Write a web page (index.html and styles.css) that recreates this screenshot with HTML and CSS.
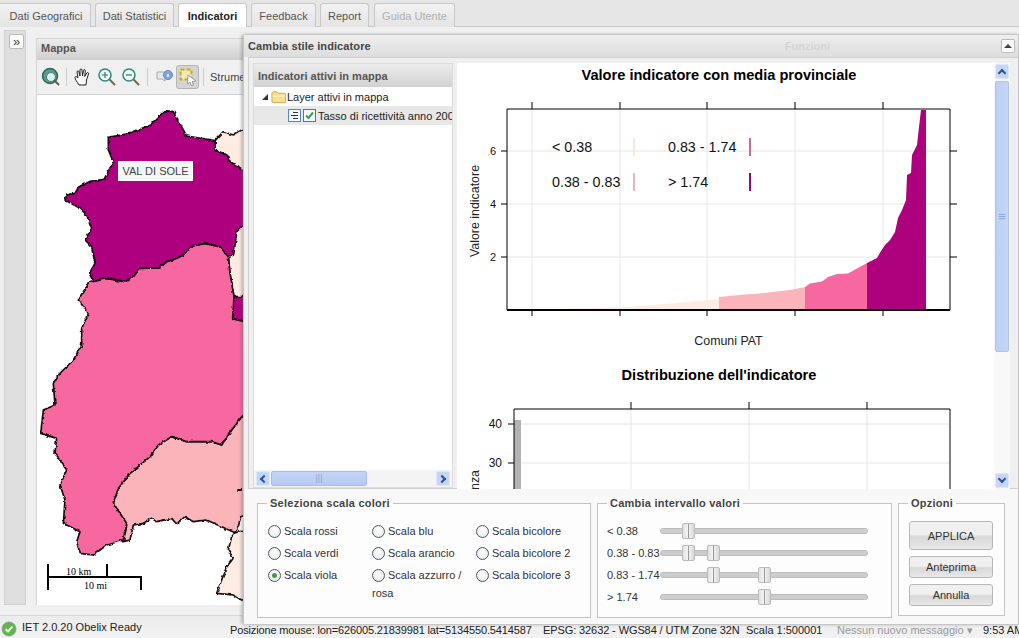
FILE: index.html
```html
<!DOCTYPE html>
<html lang="it">
<head>
<meta charset="utf-8">
<title>IET</title>
<link rel="stylesheet" href="styles.css">
</head>
<body>
<div class="app">
  <nav class="tabs">
    <span class="tab first">Dati Geografici</span>
    <span class="tab w2">Dati Statistici</span>
    <span class="tab active">Indicatori</span>
    <span class="tab w4">Feedback</span>
    <span class="tab w5">Report</span>
    <span class="tab off">Guida Utente</span>
  </nav>
  <main class="main">
    <aside class="rail"><span class="expand">&raquo;</span></aside>
    <section class="mappanel">
      <header class="maphead">Mappa</header>
      <div class="maptools">
        <svg class="ti" width="20" height="20" viewBox="0 0 20 20"><circle cx="9" cy="9" r="7.5" fill="#5b9a86" stroke="#35665c" stroke-width="1.5"/><circle cx="10" cy="10" r="4.5" fill="#dfeef2" stroke="#4d7f80"/><path d="M13 13l5 5" stroke="#6b5a3a" stroke-width="2"/></svg>
        <i class="sep s1"></i>
        <svg class="ti" width="20" height="20" viewBox="0 0 20 20"><path d="M6 18C4 15 2 12 2 10.500C2 9 4 9.500 5 11L4 5C4 3.500 5.800 3.500 6 5L7 9L7 3C7 1.500 9 1.500 9 3L9.500 9L10.500 3.500C10.800 2 12.500 2.500 12.300 4L11.700 9.500L13.800 6C14.500 5 16 5.700 15.500 7L13.500 13L13 18Z" fill="#fff" stroke="#222" stroke-width="1"/></svg>
        <svg class="ti" width="20" height="20" viewBox="0 0 20 20"><circle cx="8" cy="8" r="6" fill="#eef6f6" stroke="#2f8a7c" stroke-width="1.500"/><path d="M5 8h6M8 5v6" stroke="#2f7a70" stroke-width="1.200"/><path d="M12.500 12.500l5.500 5.500" stroke="#7a6a3a" stroke-width="2"/></svg>
        <svg class="ti" width="20" height="20" viewBox="0 0 20 20"><circle cx="8" cy="8" r="6" fill="#eef6f6" stroke="#2f8a7c" stroke-width="1.500"/><path d="M5 8h6" stroke="#2f7a70" stroke-width="1.200"/><path d="M12.500 12.500l5.500 5.500" stroke="#7a6a3a" stroke-width="2"/></svg>
        <i class="sep s2"></i>
        <svg class="ti" width="20" height="20" viewBox="0 0 20 20"><path d="M2 5h8v9l-3-2H2Z" fill="#e8e8e8" stroke="#aaa"/><circle cx="13" cy="8" r="4.500" fill="#7ea6d8" stroke="#6488b8"/><path d="M13 7v3" stroke="#fff" stroke-width="1.500"/></svg>
        <span class="pressed"><svg width="20" height="20" viewBox="0 0 20 20"><rect x="2.500" y="2.500" width="11" height="10" fill="#efe9b8" stroke="#c8a820" stroke-width="2" stroke-dasharray="4 2"/><path d="M10 8l8 6-4 .5 1.500 3.500-2 .5-1.500-3.500-2.500 2Z" fill="#fff" stroke="#999"/></svg></span>
        <i class="sep s3"></i>
        <span class="toollabel">Strumenti</span>
      </div>
      <div class="mapbody">
        <svg class="mapsvg" width="213" height="510" viewBox="0 0 213 510">
          <defs>
            <filter id="rough" x="0" y="0" width="100%" height="100%" primitiveUnits="userSpaceOnUse">
              <feTurbulence type="fractalNoise" baseFrequency=".22" numOctaves="2" seed="4" result="n"/>
              <feDisplacementMap in="SourceGraphic" in2="n" scale="3.500" xChannelSelector="R" yChannelSelector="G"/>
            </filter>
          </defs>
          <g filter="url(#rough)">
          <g transform="translate(-7,5) scale(.33333)" stroke="#140a10" stroke-width="5" stroke-linejoin="round">
            <polygon fill="#feebe2" points="555,122 580,95 610,105 635,90 660,80 660,215 635,207 600,185 590,165 555,150"/>
            <polygon fill="#feebe2" points="595,470 610,465 620,395 635,380 660,370 660,600 612,590 600,520"/>
            <polygon fill="#feebe2" points="605,1310 595,1350 610,1375 590,1400 575,1440 560,1480 610,1485 635,1500 660,1510 660,1290 615,1298"/>
            <polygon fill="#ae017e" points="612,590 660,590 660,670 608,655"/>
            <polygon fill="#fbb4b9" points="250,1210 265,1165 300,1120 360,1070 385,1035 425,1010 470,1025 545,1025 575,1035 605,990 635,950 660,930 660,1240 632,1250 625,1280 615,1298 530,1260 490,1265 465,1250 440,1272 425,1255 380,1265 365,1255 340,1270 310,1275 300,1320 280,1325 290,1275"/>
            <polygon fill="#f768a1" points="180,545 150,590 145,600 175,640 155,685 155,735 130,780 85,825 70,850 75,915 40,930 32,1000 80,1015 75,1060 110,1110 90,1155 105,1200 100,1270 150,1295 140,1325 150,1360 190,1365 230,1335 280,1320 290,1270 250,1210 265,1165 300,1120 360,1070 385,1035 425,1010 470,1025 545,1025 575,1035 605,990 635,950 660,930 660,670 608,655 612,590 600,520 595,470 570,440 525,430 480,440 460,465 440,475 410,485 390,503 330,505 310,530 285,545 230,535"/>
            <polygon fill="#ae017e" points="105,300 110,285 135,280 145,262 175,245 222,238 250,185 235,150 235,112 300,100 360,75 405,32 430,35 470,108 555,122 555,150 590,165 600,185 635,207 660,215 660,370 635,380 620,395 610,465 595,470 570,440 525,430 480,440 460,465 440,475 410,485 390,503 330,505 310,530 285,545 230,535 190,545 178,520 195,490 185,440 165,420 185,385 170,345 150,325"/>
            <path d="M622 1170h14" stroke-width="6"/>
          </g>
          </g>
          <g transform="translate(-37,-95)">
            <path class="scale" d="M48 564V590M48 577H141V590M107 564V577"/>
            <text class="scaletext" x="66" y="574.500">10 km</text>
            <text class="scaletext" x="84" y="588.500">10 mi</text>
          </g>
        </svg>
        <div class="tip">VAL DI SOLE</div>
      </div>
    </section>
  </main>
  <footer class="status">
    <svg class="okicon" width="16" height="16" viewBox="0 0 16 16"><circle cx="8" cy="8" r="7" fill="#5fb44a" stroke="#8fa88a"/><path d="M4.500 8l2.500 2.500L11.500 5.500" fill="none" stroke="#e8f5e0" stroke-width="2"/></svg>
    <span class="ready">IET 2.0.20 Obelix Ready</span>
    <span class="coords">Posizione mouse: lon=626005.21839981 lat=5134550.5414587</span>
    <span class="epsg">EPSG: 32632 - WGS84 / UTM Zone 32N</span>
    <span class="scaleval">Scala 1:500001</span>
    <span class="msgs">Nessun nuovo messaggio &#9662;</span>
    <span class="clock">9:53 AM</span>
  </footer>
</div>

<div class="dialog">
  <header class="dialoghead">
    <span class="dialogtitle">Cambia stile indicatore</span>
    <span class="ghost">Funzioni</span>
    <span class="collapse"><i class="up"></i></span>
  </header>
  <div class="frame">
    <div class="tree">
      <div class="treehead">Indicatori attivi in mappa</div>
      <div class="treebody">
        <div class="node">
          <i class="arrow"></i>
          <svg width="16" height="14" viewBox="0 0 17 14"><path d="M1 3.500C1 2 2 1.500 3 1.500H6L7.500 3H14C15 3 15.500 3.500 15.500 4.500V12C15.500 12.800 15 13 14 13H2.500C1.500 13 1 12.500 1 11.500Z" fill="#f7e08c" stroke="#c4a84a"/><path d="M1.500 6H15.500" stroke="#fff5c4"/></svg>
          <span>Layer attivi in mappa</span>
        </div>
        <div class="node selected">
          <svg class="listicon" width="13" height="13" viewBox="0 0 13 13"><rect x=".5" y=".5" width="12" height="12" fill="#f4f8fc" stroke="#5a86c0"/><path d="M5 3.500h5M3 6.500h7M5 9.500h5" stroke="#333"/></svg>
          <svg class="checkicon" width="13" height="13" viewBox="0 0 13 13"><rect x=".5" y=".5" width="12" height="12" fill="#f4f8fc" stroke="#4a76b0"/><path d="M3 6.500l2.500 2.500L10 3.500" fill="none" stroke="#3aa050" stroke-width="2"/></svg>
          <span>Tasso di ricettività anno 2008</span>
        </div>
      </div>
      <div class="hbar">
        <span class="sbtn"><i class="chev left"></i></span>
        <span class="hthumb"><i class="grip">|||</i></span>
        <span class="sbtn"><i class="chev right"></i></span>
      </div>
    </div>
    <div class="charts">
      <svg class="chartsvg" width="537" height="426" viewBox="457 63 537 426">
        <text class="title" x="719" y="80">Valore indicatore con media provinciale</text>
        <path class="grid" d="M532 109V310M620 109V310M707 109V310M795 109V310M883 109V310M507 151H950M507 204H950M507 257H950"/>
        <polygon fill="#feebe2" points="533,309.500 627,307 677,303 719,299 719,310 533,310"/>
        <polygon fill="#fbb4b9" points="719,297 745,294.500 760,293.500 790,290 805,287 805,310 719,310"/>
        <polygon fill="#f768a1" points="805,287 810,283.500 822,281.500 828,277 837,274 848,273.500 867,263 867,310 805,310"/>
        <polygon fill="#ae017e" points="867,263 877,258 881,251 885,245 890,240 895,232 898,218 902,210 906,200 907,175 911,173 912,155 917,145 919,127 921,110 926,110 926,310 867,310"/>
        <path class="axis" d="M507 109H950V310M532 102V109M620 102V109M707 102V109M795 102V109M883 102V109M501 151H507M501 204H507M501 257H507M950 151H957M950 204H957M950 257H957M532 310V316M620 310V316M707 310V316M883 310V316M795 310V316M507 109V310"/>
        <path class="baseline" d="M507 310H950"/>
        <text class="legendtext" x="552" y="152">&lt; 0.38</text>
        <text class="legendtext" x="552" y="187">0.38 - 0.83</text>
        <text class="legendtext" x="668" y="152">0.83 - 1.74</text>
        <text class="legendtext" x="668" y="187">&gt; 1.74</text>
        <rect x="633" y="138" width="2" height="18" fill="#f8e4e0"/>
        <rect x="633" y="173" width="2" height="18" fill="#e8b4bc"/>
        <rect x="749" y="138" width="2" height="18" fill="#cc6a98"/>
        <rect x="749" y="173" width="2" height="18" fill="#8a0a7c"/>
        <text class="ticklabel" x="493" y="155">6</text>
        <text class="ticklabel" x="493" y="208">4</text>
        <text class="ticklabel" x="493" y="261">2</text>
        <text class="axistitle" x="728.500" y="345">Comuni PAT</text>
        <text class="axistitle" transform="translate(479,211) rotate(-90)" x="0" y="0">Valore indicatore</text>

        <text class="title" x="719" y="380">Distribuzione dell'indicatore</text>
        <path class="grid" d="M631 409V500M749 409V500M867 409V500M514 424H950M514 463H950"/>
        <rect x="514" y="420" width="7" height="80" fill="#b3b3b3"/>
        <path class="axis" d="M514 500V409H950V500M631 402V409M749 402V409M867 402V409M508 424H514M508 463H514"/>
        <text class="ticklabel end" x="502" y="428">40</text>
        <text class="ticklabel end" x="502" y="467">30</text>
        <text class="axistitle endtext" transform="translate(479,470) rotate(-90)" x="0" y="0">Frequenza</text>
      </svg>
      <div class="vbar">
        <span class="sbtn"><i class="chev upc"></i></span>
        <span class="vthumb"><i class="grip">&#8801;</i></span>
        <span class="vtrack"></span>
        <span class="sbtn"><i class="chev down"></i></span>
      </div>
    </div>
  </div>
  <div class="controls">
    <fieldset class="fs colors">
      <legend>Seleziona scala colori</legend>
      <div class="radios">
        <label class="radio"><i class="dot"></i>Scala rossi</label>
        <label class="radio"><i class="dot"></i>Scala blu</label>
        <label class="radio"><i class="dot"></i>Scala bicolore</label>
        <label class="radio"><i class="dot"></i>Scala verdi</label>
        <label class="radio"><i class="dot"></i>Scala arancio</label>
        <label class="radio"><i class="dot"></i>Scala bicolore 2</label>
        <label class="radio"><i class="dot on"></i>Scala viola</label>
        <label class="radio"><i class="dot"></i>Scala azzurro / rosa</label>
        <label class="radio"><i class="dot"></i>Scala bicolore 3</label>
      </div>
    </fieldset>
    <fieldset class="fs ranges">
      <legend>Cambia intervallo valori</legend>
      <div class="sliderrow"><span class="rlabel">&lt; 0.38</span><div class="track"><i class="thumb" style="left:21px"></i></div></div>
      <div class="sliderrow"><span class="rlabel">0.38 - 0.83</span><div class="track"><i class="thumb" style="left:21px"></i><i class="thumb" style="left:46px"></i></div></div>
      <div class="sliderrow"><span class="rlabel">0.83 - 1.74</span><div class="track"><i class="thumb" style="left:46px"></i><i class="thumb" style="left:97px"></i></div></div>
      <div class="sliderrow"><span class="rlabel">&gt; 1.74</span><div class="track"><i class="thumb" style="left:97px"></i></div></div>
    </fieldset>
    <fieldset class="fs options">
      <legend>Opzioni</legend>
      <span class="btn big">APPLICA</span>
      <span class="btn">Anteprima</span>
      <span class="btn">Annulla</span>
    </fieldset>
  </div>
</div>
</body>
</html>
```
FILE: styles.css
```css
* { box-sizing: border-box; }
html, body { margin: 0; height: 100%; }
body {
  width: 1019px;
  height: 638px;
  overflow: hidden;
  position: relative;
  font: 11px "Liberation Sans", Arial, sans-serif;
  color: #333;
  background: #f0f0f0;
}
i { font-style: normal; }
.app { display: flex; flex-direction: column; height: 638px; }

/* tabs */
.tabs {
  display: flex;
  gap: 4px;
  height: 27px;
  padding-top: 3px;
  background: #e6e6e6;
  border-bottom: 1px solid #c8c8c8;
  flex: none;
}
.tab {
  display: flex;
  align-items: center;
  justify-content: center;
  height: 24px;
  width: 79px;
  border: 1px solid #c8c8c8;
  border-bottom: 0;
  border-radius: 3px 3px 0 0;
  background: linear-gradient(#f2f2f2, #e4e4e4);
  color: #555;
}
.tab.first { width: 91px; padding-left: 2px; border-left: 0; border-radius: 0 3px 0 0; }
.tab.w2 { width: 79px; }
.tab.active { width: 69px; height: 24px; background: #fff; color: #222; font-weight: bold; position: relative; }
.tab.w4 { width: 65px; }
.tab.w5 { width: 49px; }
.tab.off { width: 81px; margin-left: 1px; color: #b0b0b0; }

/* main */
.main { flex: 1; display: flex; padding: 3px 0 10px 4px; min-height: 0; }
.rail { width: 22px; background: #dedede; border: 1px solid #d0d0d0; padding: 3px; flex: none; margin-right: 10px; height: 575px; }
.expand {
  display: flex; align-items: center; justify-content: center;
  width: 15px; height: 15px; margin-left: 1px;
  background: #fbfbfb; border: 1px solid #bbb; border-radius: 2px;
  font-size: 13px; line-height: 11px; color: #444;
}
.mappanel { flex: 1; margin-top: 8px; display: flex; flex-direction: column; border: 1px solid #d4d4d4; border-right: 0; }
.maphead {
  height: 21px; padding: 3px 4px; flex: none;
  background: linear-gradient(#ececec, #cfcfcf);
  font-weight: bold; color: #555;
}
.maptools {
  display: flex; align-items: center; height: 35px; padding-left: 4px; flex: none;
  background: #f0f0f0; border-bottom: 1px solid #d0d0d0;
}
.ti { margin-right: 4px; flex: none; }
.sep { width: 1px; height: 18px; background: #ccc; flex: none; }
.s1 { margin: 0 6px 0 1px; }
.s2 { margin: 0 7px 0 2px; }
.s3 { margin: 0 6px 0 4px; }
.pressed {
  display: flex; align-items: center; justify-content: center;
  width: 23px; height: 24px; margin-left: -3px; background: #d4d4d4; border: 1px solid #b4b4b4; border-radius: 3px; flex: none;
}
.toollabel { color: #444; }
.mapbody { flex: 1; background: #fff; position: relative; }
.mapsvg { display: block; }
.scale { fill: none; stroke: #000; stroke-width: 2; }
.scaletext { font: 10px "Liberation Serif", serif; fill: #000; }
.tip {
  position: absolute; left: 81px; top: 66px; width: 75px; height: 20px;
  display: flex; align-items: center; justify-content: center;
  background: #f6f6f6; border: 1px solid #fff; color: #444;
}

/* status */
.status {
  height: 23px; flex: none; display: flex; align-items: flex-start;
  background: linear-gradient(#ececec, #f2f2f2); border-top: 1px solid #d8d8d8;
  padding: 5px 0 0 1px; color: #222; white-space: nowrap;
}
.okicon { flex: none; margin-right: 5px; }
.ready { width: 208px; flex: none; }
.coords { flex: none; margin-top: 3px; width: 313px; letter-spacing: -.14px; }
.epsg { flex: none; margin-top: 3px; width: 203px; letter-spacing: -.1px; }
.scaleval { flex: none; margin-top: 3px; width: 91px; }
.msgs { flex: none; margin-top: 3px; width: 146px; color: #999; }
.clock { flex: none; margin-top: 3px; }

/* dialog */
.dialog {
  position: absolute; left: 243px; top: 34px; width: 776px; height: 591px;
  display: flex; flex-direction: column;
  background: #f0f0f0; border: 1px solid #c6c6c6; border-radius: 4px 0 0 4px;
  box-shadow: -2px 0 3px rgba(90, 90, 90, .35);
}
.dialoghead {
  height: 22px; flex: none; display: flex; align-items: center; padding: 0 3px 0 4px;
  background: linear-gradient(#eeeeee, #dddddd);
}
.dialogtitle { font-weight: bold; color: #444; letter-spacing: .1px; }
.ghost { margin-left: 414px; font-weight: bold; color: #d4d4d4; }
.collapse {
  margin-left: auto; width: 14px; height: 14px; display: flex; align-items: center; justify-content: center;
  background: #fafafa; border: 1px solid #bbb; border-radius: 2px;
}
.up { width: 0; height: 0; border: 4px solid transparent; border-bottom: 4px solid #444; border-top: 0; }
.frame {
  height: 432px; flex: none; display: flex; gap: 4px; padding: 5px 4px 0 4px;
  margin-left: 4px; background: #efefef; border: solid #d0d0d0; border-width: 1px 0 1px 1px;
}
.tree { width: 200px; height: 425px; display: flex; flex-direction: column; background: #fff; border: 1px solid #dcdcdc; }
.treehead {
  height: 23px; flex: none; padding: 6px 4px;
  background: linear-gradient(#ececec, #d2d2d2);
  font-weight: bold; color: #555;
}
.treebody { flex: 1; overflow: hidden; white-space: nowrap; }
.node { display: flex; align-items: center; height: 19px; padding-left: 8px; color: #222; }
.node svg { flex: none; }
.arrow { width: 0; height: 0; border-style: solid; border-width: 0 0 6px 6px; border-color: transparent transparent #333 transparent; margin-right: 3px; }
.selected { background: #e8e8e8; padding-left: 34px; overflow: hidden; }
.checkicon { margin: 0 2px; }
.hbar { height: 17px; flex: none; display: flex; align-items: center; padding: 0 2px; background: #f4f4f4; }
.sbtn {
  width: 14px; height: 15px; flex: none; display: flex; align-items: center; justify-content: center;
  background: #c5d6f6; border: 1px solid #dde7fb; border-radius: 2px;
}
.hthumb {
  width: 96px; height: 15px; margin: 0 auto 0 1px; display: flex; align-items: center; justify-content: center;
  background: linear-gradient(#c3d4f5, #b6caf2); border: 1px solid #a9bce6; border-radius: 2px;
}
.grip { color: #8ea6d8; font-size: 9px; line-height: 9px; }
.chev { width: 6px; height: 6px; border: solid #33518c; border-width: 2px 0 0 2px; display: block; }
.chev.left { transform: rotate(-45deg); margin-left: 2px; }
.chev.right { transform: rotate(135deg); margin-right: 2px; }
.chev.upc { transform: rotate(45deg); margin-top: 3px; }
.chev.down { transform: rotate(225deg); margin-bottom: 3px; }
.charts { width: 553px; height: 426px; position: relative; display: flex; background: #fff; border: 0; }
.chartsvg { display: block; flex: none; }
.vbar { width: 16px; height: 426px; flex: none; display: flex; flex-direction: column; gap: 2px; padding: 1px 1px 1px 1px; background: #f8f8f8; }
.vbar .sbtn { width: 14px; height: 15px; }
.vthumb {
  height: 271px; flex: none; display: flex; align-items: center; justify-content: center;
  background: linear-gradient(90deg, #bccff5, #c6d6f7); border: 1px solid #b0c2ea; border-radius: 2px;
}
.vthumb .grip { font-size: 13px; }
.vtrack { flex: 1; }

/* chart text */
.title { font: bold 14.600px "Liberation Sans", Arial, sans-serif; text-anchor: middle; fill: #000; }
.grid { fill: none; stroke: #e6e6e6; stroke-width: 1; }
.axis { fill: none; stroke: #000; stroke-width: 1; }
.baseline { stroke: #000; stroke-width: 2; }
.legendtext { font: 14.300px "Liberation Sans", Arial, sans-serif; fill: #111; }
.ticklabel { font: 11px "Liberation Sans", Arial, sans-serif; text-anchor: middle; fill: #111; }
.ticklabel.end { text-anchor: end; font-size: 12px; }
.axistitle { font: 12.400px "Liberation Sans", Arial, sans-serif; text-anchor: middle; fill: #222; }
.axistitle.endtext { text-anchor: end; }

/* controls */
.controls { flex: 1; display: flex; padding: 8px 13px 0 13px; gap: 6px; background: #f8f8f8; }
.fs { margin: 0; padding: 0; border: 1px solid #c4c4c4; min-width: 0; height: 121px; background: #fdfdfd; }
.fs legend { margin-left: 0; padding: 0 3px; font-weight: bold; color: #444; letter-spacing: .25px; }
.colors { width: 334px; padding: 13px 0 0 10px; }
.colors legend { margin-left: -1px; }
.radios { display: grid; grid-template-columns: 104px 104px 104px; grid-auto-rows: 22px; line-height: 18px; }
.radio { color: #333; }
.dot {
  display: inline-block; width: 13px; height: 13px; margin: 0 3px 0 0; vertical-align: -3px; border-radius: 50%;
  border: 1px solid #556; background: radial-gradient(circle at 50% 40%, #fff, #dfe4ea);
  position: relative;
}
.dot.on::after {
  content: ""; position: absolute; left: 3px; top: 3px; width: 5px; height: 5px; border-radius: 50%; background: #3f9a4f;
}
.ranges { width: 295px; padding-top: 11px; padding-left: 9px; }
.sliderrow { display: flex; align-items: center; height: 22px; }
.rlabel { width: 53px; flex: none; color: #333; white-space: nowrap; }
.track { width: 208px; height: 6px; background: #cdcdcd; border: 1px solid #bdbdbd; border-radius: 3px; position: relative; }
.thumb {
  position: absolute; top: -6px; width: 13px; height: 16px;
  background: linear-gradient(90deg, #e2e2e2, #f4f4f4 45%, #999 50%, #f0f0f0 55%, #d8d8d8);
  border: 1px solid #bbb; border-radius: 2px;
}
.options { width: 107px; padding: 12px 0 0 10px; display: flex; flex-direction: column; gap: 6px; height: 119px; }
.options legend { margin-left: -1px; }
.btn {
  display: flex; align-items: center; justify-content: center; flex: none;
  width: 84px; height: 22px; color: #333;
  border: 1px solid #b8b8b8; border-radius: 3px;
  background: linear-gradient(#f0f0f0 0, #f0f0f0 45%, #d8d8d8 55%, #e8e8e8 100%);
}
.btn.big { height: 29px; }
```
